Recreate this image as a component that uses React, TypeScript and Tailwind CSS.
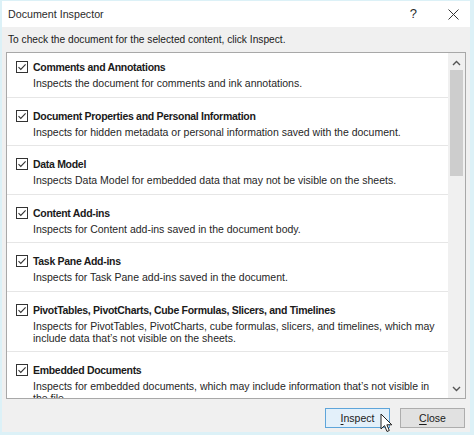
import React from 'react';

const items = [
  { title: 'Comments and Annotations', desc: ['Inspects the document for comments and ink annotations.'] },
  { title: 'Document Properties and Personal Information', desc: ['Inspects for hidden metadata or personal information saved with the document.'] },
  { title: 'Data Model', desc: ['Inspects Data Model for embedded data that may not be visible on the sheets.'] },
  { title: 'Content Add-ins', desc: ['Inspects for Content add-ins saved in the document body.'] },
  { title: 'Task Pane Add-ins', desc: ['Inspects for Task Pane add-ins saved in the document.'] },
  {
    title: 'PivotTables, PivotCharts, Cube Formulas, Slicers, and Timelines',
    desc: ['Inspects for PivotTables, PivotCharts, cube formulas, slicers, and timelines, which may', 'include data that\u2019s not visible on the sheets.'],
  },
  {
    title: 'Embedded Documents',
    desc: ['Inspects for embedded documents, which may include information that\u2019s not visible in', 'the file.'],
  },
];

function CheckBox() {
  return (
    <svg width="12" height="12" viewBox="0 0 12 12" className="shrink-0">
      <rect x="0.5" y="0.5" width="11" height="11" fill="#fff" stroke="#333" />
      <path d="M2.5 6.2 L4.8 8.5 L9.6 3.4" fill="none" stroke="#333" strokeWidth="1.1" />
    </svg>
  );
}

function Row({ title, desc, first, last }: { title: string; desc: string[]; first?: boolean; last?: boolean }) {
  return (
    <div className={`flex pl-[9px] pb-[7.5px] ${first ? 'pt-[6px]' : 'pt-[10px]'} ${last ? '' : 'border-b border-[#e6e6e6]'}`}>
      <div className="w-[17px] shrink-0 pt-[2px]">
        <CheckBox />
      </div>
      <div className="flex flex-col min-w-0">
        <div className="h-[16px] text-[10.5px] font-bold tracking-[-0.3px] leading-[16px] text-[#1a1a1a] whitespace-nowrap">{title}</div>
        <div className="mt-[2px] text-[10.5px] leading-[12px] text-[#262626]">
          {desc.map((d) => (
            <div key={d} className="h-[12px] whitespace-nowrap">{d}</div>
          ))}
        </div>
      </div>
    </div>
  );
}

export default function App() {
  return (
    <div
      className="relative w-[474px] h-[435px] bg-[#dcf1f7] pl-[2px] pr-[4px] pb-[3px] pt-[1px] flex flex-col overflow-hidden"
      style={{ fontFamily: '"Liberation Sans", Arial, sans-serif' }}
    >
      {/* Title bar */}
      <div className="h-[26px] bg-white flex items-center pl-[6px] shrink-0 text-[#2b2b2b]">
        <span className="text-[10.7px]">Document Inspector</span>
        <span className="ml-auto mr-[31px] text-[13px]">?</span>
        <svg width="11" height="11" viewBox="0 0 11 11" className="mr-[11px]">
          <path d="M0.5 0.5 L10.5 10.5 M10.5 0.5 L0.5 10.5" stroke="#333" strokeWidth="1" />
        </svg>
      </div>

      {/* Body */}
      <div className="flex-1 bg-[#f0f0f0] flex flex-col px-[4px]">
        <div className="pt-[5px] pl-[2px] h-[25px] text-[10.2px] leading-[16px] text-[#1a1a1a]">
          To check the document for the selected content, click Inspect.
        </div>

        <div className="h-[347px] border border-[#a8a8a8] bg-white flex overflow-hidden">
          <div className="flex-1 min-w-0 overflow-hidden">
            {items.map((it, i) => (
              <Row key={it.title} title={it.title} desc={it.desc} first={i === 0} last={i === items.length - 1} />
            ))}
          </div>
          <div className="w-[17px] shrink-0 bg-[#f0f0f0] flex flex-col items-center">
            <svg width="9" height="6" viewBox="0 0 9 6" className="mt-[7px]">
              <path d="M1 5 L4.5 1.5 L8 5" fill="none" stroke="#555" strokeWidth="1.4" />
            </svg>
            <div className="mt-[4px] w-[13px] h-[106px] bg-[#cdcdcd]" />
            <svg width="9" height="6" viewBox="0 0 9 6" className="mt-auto mb-[6px]">
              <path d="M1 1 L4.5 4.5 L8 1" fill="none" stroke="#555" strokeWidth="1.4" />
            </svg>
          </div>
        </div>

        <div className="flex justify-end gap-[10px] mt-[9px] pr-[1px]">
          <button className="w-[65px] h-[20px] border border-[#5ea5da] bg-[#e3f0fa] text-[10.5px] leading-[18px] text-[#1a1a1a]">
            <span className="underline underline-offset-2">I</span>nspect
          </button>
          <button className="w-[65px] h-[20px] border border-[#adadad] bg-[#e1e1e1] text-[10.5px] leading-[18px] text-[#1a1a1a]">
            <span className="underline underline-offset-2">C</span>lose
          </button>
        </div>
      </div>

      {/* Mouse cursor */}
      <svg width="13" height="20" viewBox="0 0 13 20" className="absolute left-[380px] top-[413px]">
        <path d="M1 1 L1 16 L4.5 12.6 L7 18.5 L9.3 17.5 L6.9 11.8 L11.8 11.8 Z" fill="#fff" stroke="#222" strokeWidth="1" strokeLinejoin="round" />
      </svg>
    </div>
  );
}
